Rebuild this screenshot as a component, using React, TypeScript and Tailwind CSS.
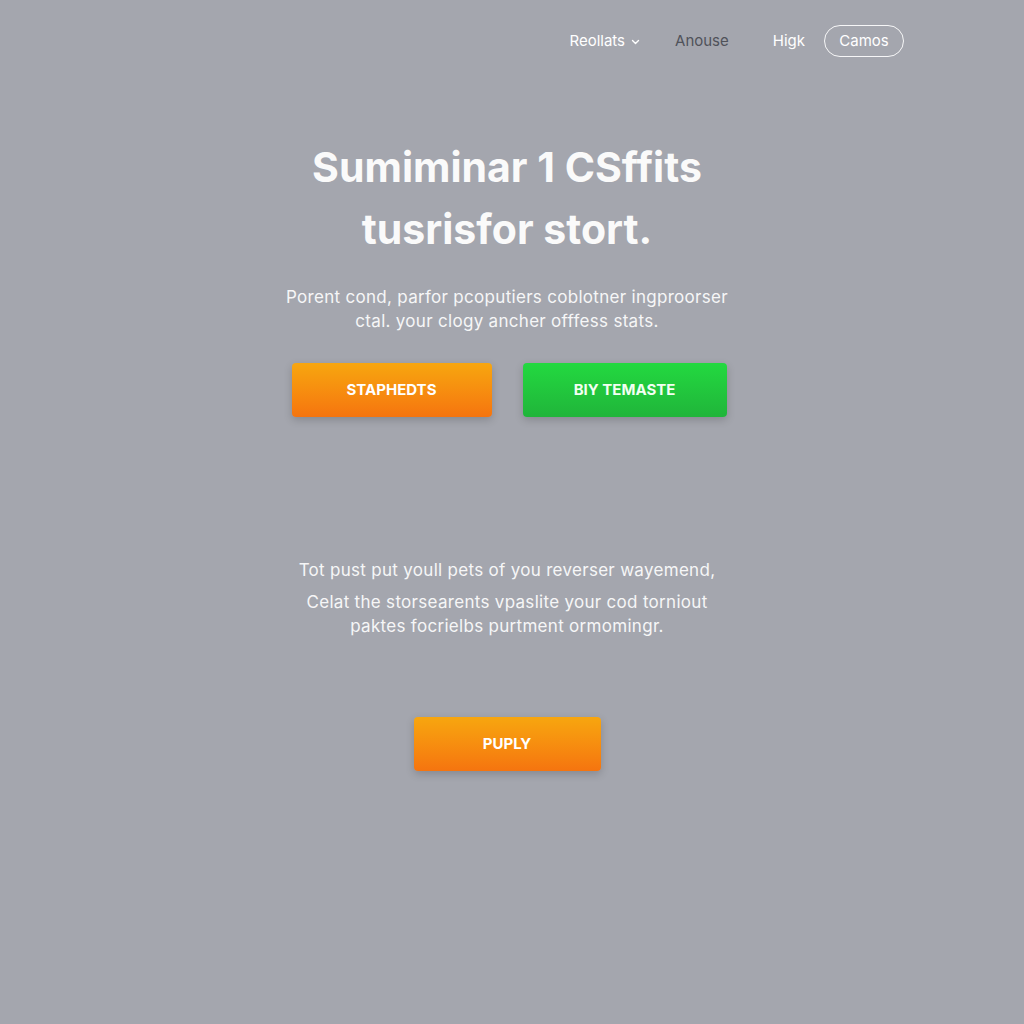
import { type FC } from 'react'

const NavBar: FC = () => (
  <header className="flex justify-end items-center h-[82px] pr-[120px]">
    <nav className="flex items-center text-[15px] text-white">
      <button className="flex items-center gap-[6px] ml-[2px]">
        Reollats
        <svg width="9" height="6" viewBox="0 0 9 6" fill="none" className="mt-[1px]">
          <path d="M1.5 1.5 4.5 4.5 7.5 1.5" stroke="white" strokeWidth="1.4" strokeLinecap="round" strokeLinejoin="round" />
        </svg>
      </button>
      <a className="ml-[35px] text-[#50525a]">Anouse</a>
      <a className="ml-[44px]">Higk</a>
      <button className="ml-[19px] h-[32px] w-[80px] rounded-full border border-white/90 text-[15px]">
        Camos
      </button>
    </nav>
  </header>
)

const App: FC = () => {
  return (
    <div
      className="w-[1024px] h-[1024px] bg-[#a4a6ae] flex flex-col"
      style={{ fontFamily: 'Inter, "Noto Sans", sans-serif' }}
    >
      <NavBar />

      <main className="flex flex-col items-center text-white pr-[10px]">
        {/* Hero */}
        <h1 className="mt-[54px] text-[41px] leading-[62px] font-bold text-center text-[#fafafa]">
          Sumiminar 1 CSffits
          <br />
          tusrisfor stort.
        </h1>

        <p className="mt-[25px] text-[17px] leading-[24px] tracking-[0.3px] text-center text-[#f6f6f7]">
          Porent cond, parfor pcoputiers coblotner ingproorser
          <br />
          ctal. your clogy ancher offfess stats.
        </p>

        <div className="mt-[30px] flex gap-[31px] ml-[4px]">
          <button className="w-[200px] h-[54px] rounded-[4px] bg-gradient-to-b from-[#f7a60f] to-[#f5740f] shadow-[0_3px_8px_rgba(0,0,0,0.18)] text-[15px] font-bold text-white">
            STAPHEDTS
          </button>
          <button className="w-[204px] h-[54px] rounded-[4px] bg-gradient-to-b from-[#23d940] to-[#20b53a] shadow-[0_3px_8px_rgba(0,0,0,0.18)] text-[15px] font-bold text-[#f2fff2]">
            BIY TEMASTE
          </button>
        </div>

        {/* Secondary call-out */}
        <p className="mt-[141px] text-[17px] leading-[24px] tracking-[0.3px] text-center text-[#f6f6f7]">
          Tot pust put youll pets of you reverser wayemend,
        </p>
        <p className="mt-[8px] text-[17px] leading-[24px] tracking-[0.3px] text-center text-[#f6f6f7]">
          Celat the storsearents vpaslite your cod torniout
          <br />
          paktes focrielbs purtment ormomingr.
        </p>

        <button className="mt-[79px] w-[187px] h-[54px] rounded-[4px] bg-gradient-to-b from-[#f7a60f] to-[#f5740f] shadow-[0_3px_8px_rgba(0,0,0,0.18)] text-[15px] font-bold text-white">
          PUPLY
        </button>
      </main>
    </div>
  )
}

export default App
